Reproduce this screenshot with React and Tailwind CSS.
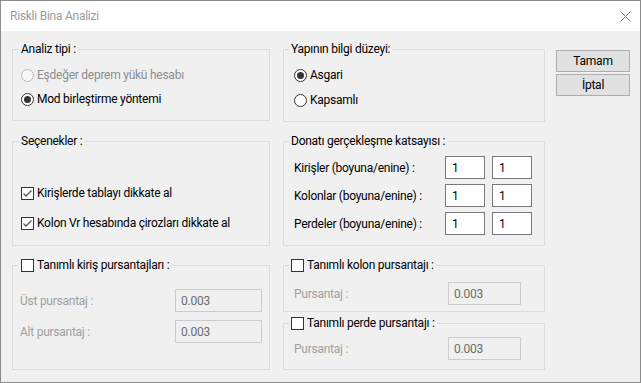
import React from "react";

function Radio({ checked, disabled }) {
  const ring = disabled ? "#bcbcbc" : "#333333";
  return (
    <svg width="13" height="13" viewBox="0 0 13 13" className="shrink-0">
      <circle cx="6.5" cy="6.5" r="6" fill={disabled ? "#f7f7f7" : "#ffffff"} stroke={ring} strokeWidth="1" />
      {checked && <circle cx="6.5" cy="6.5" r="3.5" fill="#333333" />}
    </svg>
  );
}

function Check({ checked }) {
  return (
    <svg width="13" height="13" viewBox="0 0 13 13" className="shrink-0">
      <rect x="0.5" y="0.5" width="12" height="12" fill="#ffffff" stroke="#333333" strokeWidth="1" />
      {checked && <path d="M2.5 6.5 L5 9 L10.5 3.5" fill="none" stroke="#555555" strokeWidth="1.3" />}
    </svg>
  );
}

function Group({ title, className = "", legendClass = "ml-[6px]", children }) {
  return (
    <fieldset className={`border border-[#dcdcdc] p-0 m-0 min-w-0 ${className}`}>
      <legend className={`${legendClass} px-[2px] leading-[15px] flex items-center`}>{title}</legend>
      {children}
    </fieldset>
  );
}

function NumBox({ value, disabled, className = "" }) {
  return (
    <div
      className={`h-[23px] flex items-center pl-[5px] border ${
        disabled ? "border-[#cccccc] bg-[#f0f0f0] text-[#6d6d6d]" : "border-[#7a7a7a] bg-white text-black"
      } ${className}`}
    >
      {value}
    </div>
  );
}

export default function App() {
  return (
    <div className="w-[641px] h-[383px] border border-[#8c8c8c] bg-[#f0f0f0] flex flex-col text-[12px] tracking-[-0.25px] text-black font-['Roboto',sans-serif] overflow-hidden">
      <div className="h-[30px] bg-white flex items-center justify-between pl-[9px] pr-[9px] shrink-0">
        <span className="text-[#9a9a9a] text-[12px]">Riskli Bina Analizi</span>
        <svg width="11" height="11" viewBox="0 0 11 11">
          <path d="M0.5 0.5 L10.5 10.5 M10.5 0.5 L0.5 10.5" stroke="#7a7a7a" strokeWidth="1" />
        </svg>
      </div>

      <div className="flex pl-[11px] pt-[11px]">
        {/* left column */}
        <div className="w-[258px] flex flex-col">
          <Group title="Analiz tipi :" className="h-[79px]">
            <div className="mt-[11px] pl-[8px] flex flex-col gap-[9px]">
              <div className="flex items-center gap-[3px] leading-[15px] text-[#8d8d8d]">
                <Radio disabled />
                <span>Eşdeğer deprem yükü hesabı</span>
              </div>
              <div className="flex items-center gap-[3px] leading-[15px]">
                <Radio checked />
                <span>Mod birleştirme yöntemi</span>
              </div>
            </div>
          </Group>

          <Group title="Seçenekler :" className="h-[112px] mt-[13px]">
            <div className="mt-[37px] pl-[8px] flex flex-col gap-[15px]">
              <div className="flex items-center gap-[3px] leading-[15px]">
                <Check checked />
                <span>Kirişlerde tablayı dikkate al</span>
              </div>
              <div className="flex items-center gap-[3px] leading-[15px]">
                <Check checked />
                <span>Kolon Vr hesabında çirozları dikkate al</span>
              </div>
            </div>
          </Group>

          <Group
            title={
              <span className="flex items-center gap-[3px]">
                <Check />
                <span>Tanımlı kiriş pursantajları :</span>
              </span>
            }
            className="h-[112px] mt-[12px]"
          >
            <div className="mt-[16px] pl-[7px] flex flex-col gap-[8px] text-[#a0a0a0]">
              <div className="flex items-center">
                <span className="w-[155px]">Üst pursantaj :</span>
                <NumBox value="0.003" disabled className="w-[87px]" />
              </div>
              <div className="flex items-center">
                <span className="w-[155px]">Alt pursantaj :</span>
                <NumBox value="0.003" disabled className="w-[87px]" />
              </div>
            </div>
          </Group>
        </div>

        {/* right column */}
        <div className="w-[262px] ml-[13px] flex flex-col">
          <Group title="Yapının bilgi düzeyi:" legendClass="ml-[5px]" className="h-[80px]">
            <div className="mt-[11px] pl-[10px] flex flex-col gap-[10px]">
              <div className="flex items-center gap-[3px] leading-[15px]">
                <Radio checked />
                <span>Asgari</span>
              </div>
              <div className="flex items-center gap-[3px] leading-[15px]">
                <Radio />
                <span>Kapsamlı</span>
              </div>
            </div>
          </Group>

          <Group title="Donatı gerçekleşme katsayısı :" legendClass="ml-[5px]" className="h-[112px] mt-[12px]">
            <div className="mt-[7px] pl-[10px] flex flex-col gap-[5px]">
              {["Kirişler (boyuna/enine) :", "Kolonlar (boyuna/enine) :", "Perdeler (boyuna/enine) :"].map((l) => (
                <div key={l} className="flex items-center">
                  <span className="w-[151px]">{l}</span>
                  <NumBox value="1" className="w-[40px] pl-[6px]" />
                  <NumBox value="1" className="w-[40px] ml-[7px] pl-[6px]" />
                </div>
              ))}
            </div>
          </Group>

          <Group
            title={
              <span className="flex items-center gap-[3px]">
                <Check />
                <span>Tanımlı kolon pursantajı :</span>
              </span>
            }
            legendClass="ml-[5px]"
            className="h-[54px] mt-[12px]"
          >
            <div className="mt-[9px] pl-[10px] flex items-center text-[#a0a0a0]">
              <span className="w-[154px]">Pursantaj :</span>
              <NumBox value="0.003" disabled className="w-[73px] h-[22px]" />
            </div>
          </Group>

          <Group
            title={
              <span className="flex items-center gap-[3px]">
                <Check />
                <span>Tanımlı perde pursantajı :</span>
              </span>
            }
            legendClass="ml-[5px]"
            className="h-[54px] mt-[4px]"
          >
            <div className="mt-[6px] pl-[10px] flex items-center text-[#a0a0a0]">
              <span className="w-[154px]">Pursantaj :</span>
              <NumBox value="0.003" disabled className="w-[73px] h-[22px]" />
            </div>
          </Group>
        </div>

        {/* buttons */}
        <div className="ml-[11px] mt-[8px] flex flex-col gap-[2px]">
          <button className="w-[74px] h-[22px] bg-[#e1e1e1] border border-[#adadad] leading-none">Tamam</button>
          <button className="w-[74px] h-[22px] bg-[#e1e1e1] border border-[#adadad] leading-none">İptal</button>
        </div>
      </div>
    </div>
  );
}
